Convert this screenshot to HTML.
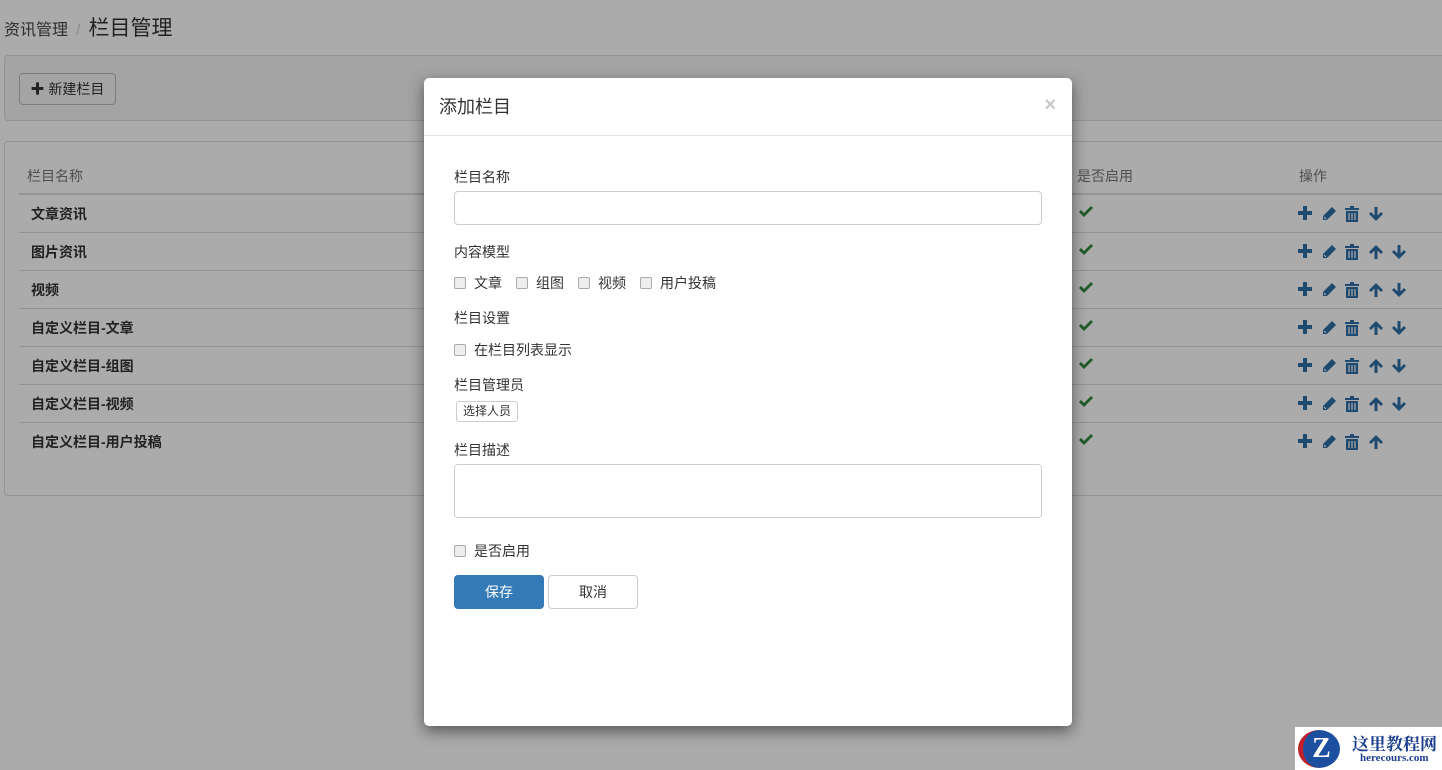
<!DOCTYPE html>
<html><head><meta charset="utf-8"><style>
*{box-sizing:border-box;margin:0;padding:0}
body{width:1442px;height:770px;overflow:hidden;background:#fff;font-family:"Liberation Sans","Noto Sans CJK SC",sans-serif;font-size:14px;color:#333;position:relative}
.abs{position:absolute}
.bc{left:4px;top:12px;font-size:16px;color:#444}
.bc b{font-weight:normal;font-size:21px;color:#333}
.bc i{font-style:normal;color:#ccc;margin:0 8px}
.p1{left:4px;top:55px;width:1450px;height:66px;border:1px solid #ddd;border-radius:4px;background:#f5f5f5}
.btn1{left:19px;top:73px;width:97px;height:32px;border:1px solid #bbb;border-radius:4px;background:#f5f5f5;font-size:14px;line-height:30px;text-align:center}
.p2{left:4px;top:141px;width:1450px;height:355px;border:1px solid #ddd;border-radius:4px;background:#fff}
.th{top:166px;color:#777;font-size:14px}
.row{left:19px;width:1440px;height:38px;border-top:1px solid #ddd}
.name{left:31px;font-weight:bold;font-size:14px}
.ov{left:0;top:0;width:1442px;height:770px;background:rgba(0,0,0,.33)}
.modal{left:424px;top:78px;width:648px;height:648px;background:#fff;border-radius:5px;box-shadow:0 5px 15px rgba(0,0,0,.5)}
.mh{height:58px;border-bottom:1px solid #e5e5e5;padding:15px 15px;font-size:18px;color:#333}
.x{right:16px;top:16px;font-size:20px;font-weight:bold;color:#c8c8c8}
.lbl{left:30px;font-size:14px;color:#333}
.inp{left:30px;width:588px;border:1px solid #ccc;border-radius:4px}
.cb{display:inline-block;width:12px;height:12px;border:1px solid #aaa;border-radius:2px;background:#eee;vertical-align:-1px;margin-right:8px}
.gap{display:inline-block;width:14px}
</style></head><body>
<div class="abs bc">资讯管理<i>/</i><b>栏目管理</b></div>
<div class="abs p1"></div>
<div class="abs btn1"><span style="font-weight:bold">✚</span> 新建栏目</div>
<div class="abs p2"></div>
<div class="abs th" style="left:27px">栏目名称</div>
<div class="abs th" style="left:1077px">是否启用</div>
<div class="abs th" style="left:1299px">操作</div>
<div class="abs" style="left:19px;top:193px;width:1440px;height:2px;background:#ddd"></div>
<div id="rows"></div>
<script>
var names=["文章资讯","图片资讯","视频","自定义栏目-文章","自定义栏目-组图","自定义栏目-视频","自定义栏目-用户投稿"];
var h="";
var plus='<svg width="14" height="14" viewBox="0 0 14 14"><path d="M5 0h4v5h5v4H9v5H5V9H0V5h5z" fill="#2f6fa8"/></svg>';
var pen='<svg width="16" height="16" viewBox="0 0 16 16"><path d="M11 1l4 4-9 9H2v-4z" fill="#2f6fa8"/><path d="M3 11l2 2" stroke="#fff" stroke-width="1"/></svg>';
var trash='<svg width="14" height="16" viewBox="0 0 14 16"><path d="M0 2h14v2H0zM5 0h4v2H5zM1 5h12v11H1z" fill="#2f6fa8"/><path d="M4 7v7M7 7v7M10 7v7" stroke="#fff" stroke-width="1.2"/></svg>';
var up='<svg width="16" height="16" viewBox="0 0 16 16"><path d="M8 1l7 7-2 2-3.5-3.5V15h-3V6.5L3 10 1 8z" fill="#2f6fa8"/></svg>';
var dn='<svg width="16" height="16" viewBox="0 0 16 16"><path d="M8 15l7-7-2-2-3.5 3.5V1h-3v8.5L3 6 1 8z" fill="#2f6fa8"/></svg>';
var chk='<svg width="16" height="14" viewBox="0 0 16 14"><path d="M1 7l2-2 3 3 7-7 2 2-9 9z" fill="#2e8b3e"/></svg>';
for(var i=0;i<7;i++){var t=195+i*38;
h+='<div class="abs row" style="top:'+(t-1+ (i?0:1))+'px;'+(i?'':'border:none')+'"></div>';
h+='<div class="abs name" style="top:'+(t+9)+'px">'+names[i]+'</div>';
h+='<div class="abs" style="left:1078px;top:'+(t+10)+'px">'+chk+'</div>';
var ic=[plus,pen,trash];if(i>0)ic.push(up);if(i<6)ic.push(dn);
for(var j=0;j<ic.length;j++)h+='<div class="abs" style="left:'+(1298+j*23.3)+'px;top:'+(t+11)+'px">'+ic[j]+'</div>';}
document.getElementById('rows').innerHTML=h;
</script>
<div class="abs ov"></div>
<div class="abs" style="left:1295px;top:727px;width:147px;height:43px;background:#fff"></div>
<div class="abs" style="left:1298px;top:730px;width:42px;height:38px;border-radius:50%;background:#1d4fa0;color:#fff;font-weight:bold;font-size:28px;text-align:center;line-height:38px;font-family:'Liberation Serif',serif;border-left:5px solid #c0202a">Z</div>
<div class="abs" style="left:1352px;top:730px;font-family:'Liberation Serif','Noto Serif CJK SC',serif;font-weight:bold;font-size:17px;color:#1d3f8f">这里教程网</div>
<div class="abs" style="left:1360px;top:752px;font-family:'Liberation Serif',serif;font-weight:bold;font-size:11px;color:#1d3f8f">herecours.com</div>
<div class="abs modal">
<div class="mh">添加栏目</div>
<div class="abs x">×</div>
<div class="abs lbl" style="top:89px">栏目名称</div>
<div class="abs inp" style="top:113px;height:34px"></div>
<div class="abs lbl" style="top:164px">内容模型</div>
<div class="abs lbl" style="top:195px"><span class="cb"></span>文章<span class="gap"></span><span class="cb"></span>组图<span class="gap"></span><span class="cb"></span>视频<span class="gap"></span><span class="cb"></span>用户投稿</div>
<div class="abs lbl" style="top:230px">栏目设置</div>
<div class="abs lbl" style="top:262px"><span class="cb"></span>在栏目列表显示</div>
<div class="abs lbl" style="top:297px">栏目管理员</div>
<div class="abs" style="left:32px;top:323px;width:62px;height:21px;border:1px solid #ccc;border-radius:3px;font-size:12px;line-height:19px;text-align:center">选择人员</div>
<div class="abs lbl" style="top:362px">栏目描述</div>
<div class="abs inp" style="top:386px;height:54px"></div>
<div class="abs lbl" style="top:463px"><span class="cb"></span>是否启用</div>
<div class="abs" style="left:30px;top:497px;width:90px;height:34px;background:#337ab7;border-radius:4px;color:#fff;text-align:center;line-height:34px">保存</div>
<div class="abs" style="left:124px;top:497px;width:90px;height:34px;border:1px solid #ccc;border-radius:4px;text-align:center;line-height:32px">取消</div>
</div>
</body></html>
